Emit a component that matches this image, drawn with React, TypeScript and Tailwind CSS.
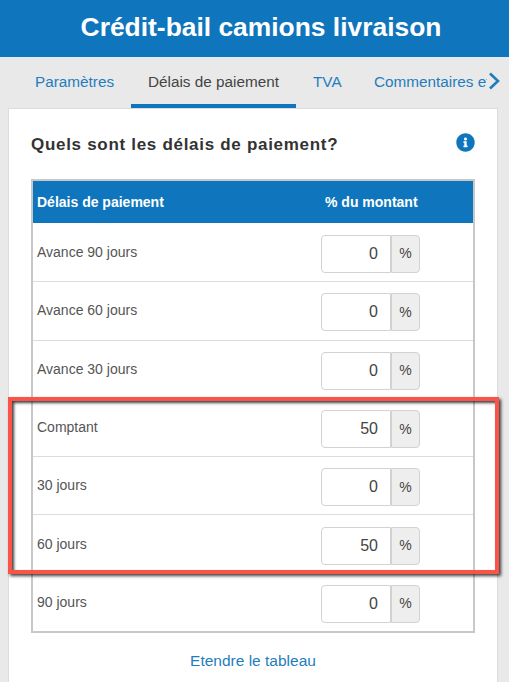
const rows = [
  { label: "Avance 90 jours", value: "0" },
  { label: "Avance 60 jours", value: "0" },
  { label: "Avance 30 jours", value: "0" },
  { label: "Comptant", value: "50" },
  { label: "30 jours", value: "0" },
  { label: "60 jours", value: "50" },
  { label: "90 jours", value: "0" },
];

function Info() {
  return (
    <svg viewBox="0 0 512 512" className="w-[19px] h-[19px] fill-[#0f75bc]">
      <path d="M256 8C119 8 8 119 8 256s111 248 248 248 248-111 248-248S393 8 256 8zm0 110c23 0 42 19 42 42s-19 42-42 42-42-19-42-42 19-42 42-42zm56 254c0 7-5 12-12 12h-88c-7 0-12-5-12-12v-24c0-7 5-12 12-12h12v-64h-12c-7 0-12-5-12-12v-24c0-7 5-12 12-12h64c7 0 12 5 12 12v100h12c7 0 12 5 12 12v24z" />
    </svg>
  );
}

export default function App() {
  return (
    <div className="relative w-[509px] h-[682px] overflow-hidden bg-[#e9e9e9] font-['Liberation_Sans',Arial,sans-serif]">
      <header className="h-[57px] bg-[#0f75bc] flex items-center justify-center pl-[13px] pb-[2px]">
        <h1 className="text-[26.4px] font-bold text-white leading-none">Crédit-bail camions livraison</h1>
      </header>
      <nav className="relative h-[51px] flex text-[15.3px] overflow-hidden">
        <a className="w-[131px] pl-[35px] pt-[14px] text-[#1f7dbd] whitespace-nowrap">Paramètres</a>
        <a className="w-[165px] h-[51px] pt-[14px] text-center text-[#444] border-b-4 border-[#0f75bc] whitespace-nowrap">Délais de paiement</a>
        <a className="w-[78px] pl-[17px] pt-[14px] text-[#1f7dbd] whitespace-nowrap">TVA</a>
        <a className="w-[113px] pt-[14px] text-[#1f7dbd] whitespace-nowrap overflow-hidden">Commentaires et</a>
        <svg viewBox="0 0 12 18" className="w-[12px] h-[18px] mt-[15px] ml-[1px] fill-none stroke-[#1f7dbd] stroke-[2.6]">
          <path d="M2 1.5 10 9 2 16.5" />
        </svg>
      </nav>
      <main className="mx-[8px] w-[490px] h-[574px] bg-white border border-[#dcdcdc] border-b-0 px-[22px]">
        <div className="flex justify-between items-start pt-[24px] h-[70px]">
          <h2 className="mt-[2px] text-[17px] font-bold text-[#333] tracking-[0.7px] leading-[20px]">Quels sont les délais de paiement?</h2>
          <div><Info /></div>
        </div>
        <div className="w-[444px] border-2 border-[#c8c8c8]">
          <div className="h-[42px] bg-[#0f75bc] flex items-center text-white font-bold text-[14px]">
            <span className="pl-[4px] w-[292px]">Délais de paiement</span>
            <span>% du montant</span>
          </div>
          {rows.map((r, i) => (
            <div key={r.label} className={`h-[58.3px] flex items-center ${i > 0 ? "border-t border-[#dcdcdc]" : ""}`}>
              <span className="w-[288px] pl-[4px] text-[14px] text-[#555]">{r.label}</span>
              <div className="flex w-[99px] h-[38px] mt-[3px] text-[16px] text-[#444]">
                <div className="w-[70px] border border-[#d2d2d2] rounded-l-[4px] flex items-center justify-end pr-[12px]">{r.value}</div>
                <div className="w-[29px] border border-l-[#d2d2d2] border-[#d2d2d2] rounded-r-[4px] bg-[#eeeeee] flex items-center justify-center text-[14px]">%</div>
              </div>
            </div>
          ))}
        </div>
        <div className="text-center text-[15.5px] text-[#1f7dbd] mt-[16px]">Etendre le tableau</div>
      </main>
      <div className="absolute left-[8px] top-[397px] w-[491px] h-[177px] border-4 border-[#fa5448] shadow-[2px_2px_3px_rgba(0,0,0,0.75),inset_2px_2px_3px_rgba(0,0,0,0.75)]" />
    </div>
  );
}
